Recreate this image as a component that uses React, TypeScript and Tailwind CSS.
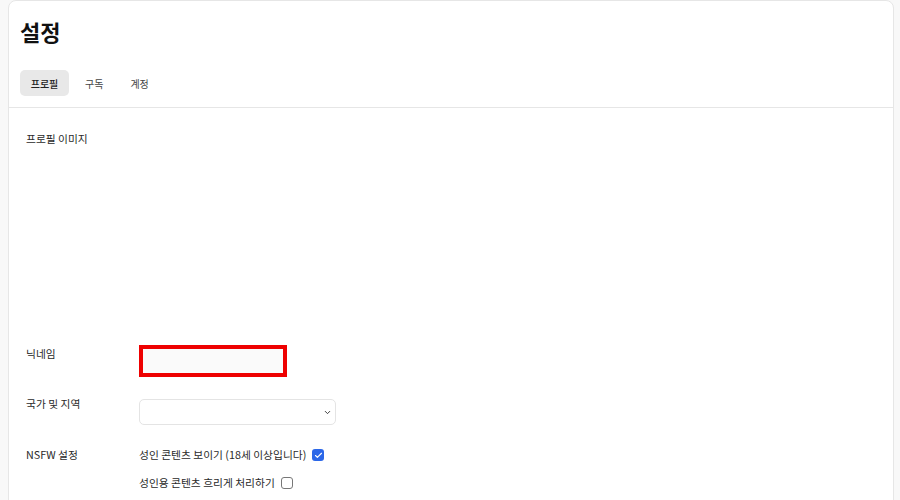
import { ChevronDown, Check } from 'lucide-react';

const tabs = ['프로필', '구독', '계정'];

export default function App() {
  return (
    <div
      className="h-[500px] w-[900px] overflow-hidden bg-[#f8f8f8] text-[#2a2a2a]"
      style={{ fontFamily: '"Noto Sans CJK KR", "Noto Sans", sans-serif' }}
    >
      <div className="ml-2 h-[510px] w-[886px] rounded-t-lg border border-[#e6e6e6] bg-white">
        {/* Header */}
        <div className="px-[11px] pt-[14px]">
          <h1 className="text-[22px] font-bold leading-[32px] text-[#111]">설정</h1>
          <div className="mt-[23px] flex gap-[5px] pb-[11px]">
            {tabs.map((tab, i) => (
              <button
                key={tab}
                className={`h-[26px] rounded-[5px] text-[10px] ${
                  i === 0
                    ? 'w-[49px] bg-[#e8e8e8] font-medium text-[#222]'
                    : 'px-[11px] text-[#444]'
                }`}
              >
                {tab}
              </button>
            ))}
          </div>
        </div>
        <div className="border-t border-[#e6e6e6]" />

        {/* Profile form */}
        <div className="pl-[17px] pt-[23px] text-[10.75px] leading-4">
          <div className="flex">
            <div className="w-[113px]">프로필 이미지</div>
            <div className="h-[191px]" />
          </div>

          <div className="mt-[23px] flex items-start">
            <div className="mt-[1px] w-[113px]">닉네임</div>
            <input className="h-[32px] w-[148px] border-[4px] border-[#ee0000] bg-[#fafafa] outline-none" />
          </div>

          <div className="mt-[22px] flex items-start">
            <div className="-mt-[3px] w-[113px]">국가 및 지역</div>
            <div className="relative h-[26px] w-[197px] rounded-[5px] border border-[#e4e4e4] bg-white">
              <ChevronDown
                className="absolute right-[3px] top-[8px] text-[#333]"
                size={9}
                strokeWidth={2.5}
              />
            </div>
          </div>

          <div className="mt-[22px] flex items-start">
            <div className="w-[113px]">NSFW 설정</div>
            <div className="flex flex-col gap-[12px]">
              <label className="flex items-center gap-[6px]">
                <span>성인 콘텐츠 보이기 (18세 이상입니다)</span>
                <span className="flex h-[12px] w-[12px] items-center justify-center rounded-[3px] bg-[#2b67e8]">
                  <Check size={9} strokeWidth={3} className="text-white" />
                </span>
              </label>
              <label className="flex items-center gap-[6px]">
                <span>성인용 콘텐츠 흐리게 처리하기</span>
                <span className="h-[12px] w-[12px] rounded-[3px] border border-[#777] bg-white" />
              </label>
            </div>
          </div>
        </div>
      </div>
    </div>
  );
}
